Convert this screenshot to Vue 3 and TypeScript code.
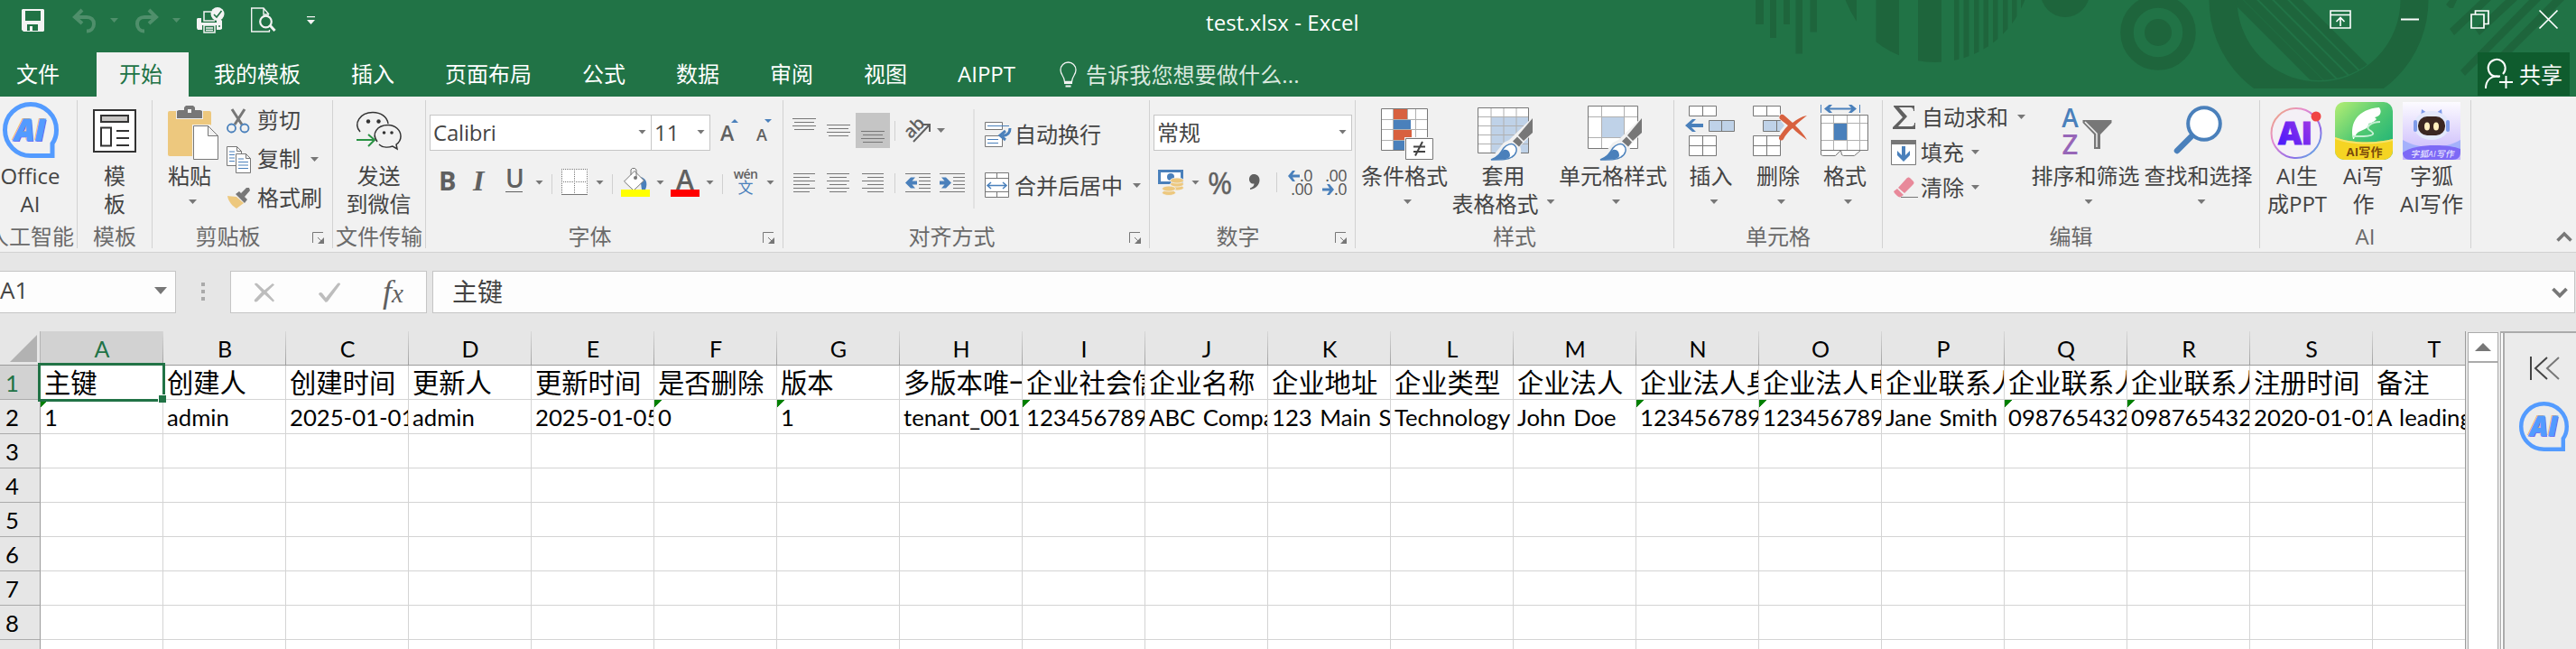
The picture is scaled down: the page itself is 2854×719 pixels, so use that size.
<script setup lang="ts">
interface Column {
  letter: string
  title: string
  value: string
  flagged?: boolean
}

const tabs: string[] = ['我的模板', '插入', '页面布局', '公式', '数据', '审阅', '视图', 'AIPPT']

const columns: Column[] = [
  { letter: 'A', title: '主键', value: '1', flagged: true },
  { letter: 'B', title: '创建人', value: 'admin' },
  { letter: 'C', title: '创建时间', value: '2025-01-01' },
  { letter: 'D', title: '更新人', value: 'admin' },
  { letter: 'E', title: '更新时间', value: '2025-01-05' },
  { letter: 'F', title: '是否删除', value: '0', flagged: true },
  { letter: 'G', title: '版本', value: '1', flagged: true },
  { letter: 'H', title: '多版本唯一', value: 'tenant_001' },
  { letter: 'I', title: '企业社会信', value: '123456789', flagged: true },
  { letter: 'J', title: '企业名称', value: 'ABC Compa' },
  { letter: 'K', title: '企业地址', value: '123 Main St' },
  { letter: 'L', title: '企业类型', value: 'Technology' },
  { letter: 'M', title: '企业法人', value: 'John Doe' },
  { letter: 'N', title: '企业法人身', value: '123456789', flagged: true },
  { letter: 'O', title: '企业法人电', value: '123456789', flagged: true },
  { letter: 'P', title: '企业联系人', value: 'Jane Smith' },
  { letter: 'Q', title: '企业联系人', value: '098765432', flagged: true },
  { letter: 'R', title: '企业联系人', value: '098765432', flagged: true },
  { letter: 'S', title: '注册时间', value: '2020-01-01' },
  { letter: 'T', title: '备注', value: 'A leading' },
]

const emptyRows: number[] = [3, 4, 5, 6, 7, 8]
</script>

<template>
  <div class="app">
    <header class="top">
      <svg class="deco" width="1004" height="107" viewBox="0 0 1004 107" fill="#1e653c">
        <defs>
          <clipPath id="c1"><circle cx="294" cy="-37" r="106" /></clipPath>
          <clipPath id="c2"><circle cx="719" cy="-2" r="91" /></clipPath>
          <clipPath id="c3"><rect x="590" y="0" width="260" height="98" /></clipPath>
        </defs>
        <path d="M95 0h9v27h-9zM111 0h7v42h-7zM126 0h7v27h-7zM139.500 0h7.500v59.500h-7.500zM155.500 0h7.500v35.500h-7.500z" />
        <g clip-path="url(#c1)">
          <path d="M180 0h27v40h-27zM228.500 0h25.500v80h-25.500zM275 0h26v80h-26zM315 0h5.500v80h-5.500zM325.500 0h6v80h-6zM337 0h5.500v80h-5.500zM347.500 0h5.500v80h-5.500zM358 0h5.500v80h-5.500zM369 0h5.500v80h-5.500zM379 0h5.500v80h-5.500zM389 0h5v80h-5z" />
        </g>
        <circle cx="438" cy="-8" r="27" />
        <circle cx="541" cy="36" r="34.500" fill="none" stroke="#1e653c" stroke-width="14.500" />
        <circle cx="541" cy="36" r="15" />
        <g clip-path="url(#c3)">
          <circle cx="719" cy="0" r="106" fill="none" stroke="#1e653c" stroke-width="31" />
        </g>
        <g clip-path="url(#c2)" stroke="#1e653c" stroke-width="10" fill="none">
          <path d="M618 -10l110 110M633 -10l110 110M650 -10l110 110M667 -10l110 110M684 -10l110 110" />
        </g>
        <path d="M864 0h8l-4 9h-4l-4-4zM898 0h12l-41 39-5-7zM926 0h13l-42 39-5-7zM952 0h13l-84 84-5-6zM978 0h13l-68 68h-12z" />
      </svg>
      <div class="titlebar">
        <div class="qat">
          <svg width="25" height="25" viewBox="0 0 25 25"><path fill="#f3f3f3" fill-rule="evenodd" d="M1 0h23l1 1v23l-1 1H2l-2-2V1zM4 2v11h17V2zM6 17v7h3v-5h3v5h6v-7z" /></svg>
          <svg width="26" height="26" viewBox="0 0 26 26" fill="none" stroke="#4f8f6b" stroke-width="4"><path d="M2 9h14c5 0 8 3 8 7.500s-3 8-8 8M11 1L3 9l8 7" /></svg>
          <i class="caret dim"></i>
          <svg width="26" height="26" viewBox="0 0 26 26" fill="none" stroke="#4f8f6b" stroke-width="4"><path d="M24 9H10c-5 0-8 3-8 7.500s3 8 8 8M15 1l8 8-8 7" /></svg>
          <i class="caret dim"></i>
          <svg width="31" height="30" viewBox="0 0 31 30">
            <path fill="#f3f3f3" d="M1 12h4v5h17v-3h5l1 1v9l-2 1h-4v-5H6v5H1l-1-2V13z" />
            <path fill="none" stroke="#f3f3f3" stroke-width="1.500" d="M16 5H8v10h12M8 20h12v8H8zM10 23h8M10 25.500h8" />
            <circle cx="23" cy="7.500" r="7.500" fill="#f3f3f3" /><path d="M19 8l3 3 5.500-7" fill="none" stroke="#217346" stroke-width="1.600" />
            <circle cx="25" cy="21" r="1" fill="#217346" />
          </svg>
          <svg width="28" height="29" viewBox="0 0 28 29" fill="none" stroke="#f3f3f3">
            <path d="M21 27H.7V1H14l6 7M14 1v7h6M20.500 25v2" stroke-width="1.400" /><circle cx="16.500" cy="16" r="6.300" stroke-width="2.200" /><path d="M21 20l5.500 6" stroke-width="3" />
          </svg>
          <svg width="9" height="10" viewBox="0 0 9 10" fill="#f3f3f3"><path d="M0 0h9v1.300H0zM0 4h9L4.500 9z" /></svg>
        </div>
        <div class="doc-title">test.xlsx - Excel</div>
        <div class="win">
          <svg width="24" height="21" viewBox="0 0 24 21" fill="none" stroke="#fff" stroke-width="1.600"><path d="M1 1h22v19H1zM1 5.500h22M12 18V8.500M7.500 13L12 8.500l4.500 4.500" /></svg>
          <svg width="20" height="21" viewBox="0 0 20 21"><path d="M0 9.500h20v2H0z" fill="#fff" /></svg>
          <svg width="21" height="21" viewBox="0 0 21 21" fill="none" stroke="#fff" stroke-width="1.700"><path d="M1 5h14v15H1zM5.500 5V1H20v14.500h-5" /></svg>
          <svg width="21" height="21" viewBox="0 0 21 21" fill="none" stroke="#fff" stroke-width="1.700"><path d="M.5.500l20 20M20.500.500l-20 20" /></svg>
        </div>
      </div>
      <nav class="tabs">
        <span class="tab file">文件</span>
        <span class="tab active">开始</span>
        <span v-for="t in tabs" :key="t" class="tab">{{ t }}</span>
        <svg class="bulb" width="19" height="29" viewBox="0 0 19 29" fill="none" stroke="#f3f3f3" stroke-width="1.300"><path d="M5.500 22.500c0-6-4.500-7-4.500-13a8.500 8.500 0 0 1 17 0c0 6-4.500 7-4.500 13z" /><path d="M5 24h9M6.500 27.500h6" stroke-width="2" /></svg>
        <span class="tell">告诉我您想要做什么...</span>
        <span class="share">
          <svg width="31" height="33" viewBox="0 0 31 33" fill="none" stroke="#fff" stroke-width="2"><path d="M20 16a9.500 9.500 0 1 0-9.500 2.500M16 19c-9-2-15 4-15 13" /><path d="M10 18.500h7M16 25h15M23.500 18v14" /></svg>
          <span>共享</span>
        </span>
      </nav>
    </header>

    <section class="ribbon">
      <div class="group g1">
        <div class="body">
          <div class="big b67">
            <div class="ico"><div class="ai-logo"><svg viewBox="0 0 62 62"><path d="M31 59.500A28.500 28.500 0 1 1 59.500 31c0 6-1.500 11-4.500 15v13.500z" fill="none" stroke="#539bff" stroke-width="5" /></svg><b>AI</b></div></div>
            <span>Office</span><span>AI</span>
          </div>
        </div>
        <div class="foot"><span class="clip">人工智能</span></div>
      </div>

      <div class="group g2">
        <div class="body">
          <div class="big b82">
            <svg class="ico" viewBox="0 0 64 64"><rect x="9" y="9" width="46" height="46" fill="#fff" stroke="#333" stroke-width="2" /><rect x="17" y="15" width="30" height="7" fill="#c8c6c4" stroke="#333" stroke-width="2" /><path d="M17 28.500h11v20H17zM34 32h14M34 40h14M34 48h14" fill="none" stroke="#333" stroke-width="2" /></svg>
            <span>模</span><span>板</span>
          </div>
        </div>
        <div class="foot"><span>模板</span></div>
      </div>

      <div class="group g3">
        <div class="body">
          <div class="big b82">
            <svg class="ico" viewBox="0 0 64 64"><rect x="8" y="10" width="48" height="50" rx="2" fill="#edc87e" /><path d="M17 8h30v11H17z" fill="#f1f1f1" /><path d="M18 18v-8l2-1h6V6l2-2h8l2 2v3h6l2 1v8zM30 8v4h4V8z" fill="#777" fill-rule="evenodd" /><path d="M35 25h20l10 10v30H35z" fill="#f1f1f1" /><path d="M36.500 26.500h16l11 11v26h-27zM52.500 26.500v11h11" fill="#fff" stroke="#777" /></svg>
            <span>粘贴</span><span class="cl"><i class="caret"></i></span>
          </div>
          <div class="clip-list">
            <div class="line">
              <svg width="26" height="28" viewBox="0 0 26 28" fill="none"><path d="M6 1l11 17M20 1L9 18" stroke="#777" stroke-width="3" /><circle cx="5.500" cy="22" r="4.500" stroke="#4a80bb" stroke-width="1.800" /><circle cx="20" cy="22" r="4.500" stroke="#4a80bb" stroke-width="1.800" /></svg>
              <span>剪切</span>
            </div>
            <div class="line">
              <svg width="27" height="30" viewBox="0 0 27 30" fill="#fff" stroke="#777"><path d="M.5.500h11l5 5v16H.5zM11.500.500v5h5" /><path d="M3 6h6M3 9.500h6M3 13h6M3 16.500h6" stroke="#4a80bb" /><path d="M10.500 8.500h11l5 5v16h-16zM21.500 8.500v5h5" /><path d="M13 14h6M13 17.500h11M13 21h11M13 24.500h11" stroke="#4a80bb" /></svg>
              <span>复制</span><i class="caret"></i>
            </div>
            <div class="line">
              <svg width="27" height="24" viewBox="0 0 27 24"><path d="M1 9l10 1 8 7-8 6C6 20 2 15 1 9z" fill="#edc87e" /><path d="M10 7l4-3 9 9-3 4zM16 6l6-6h3l1 3-6 7z" fill="#777" /></svg>
              <span>格式刷</span>
            </div>
          </div>
        </div>
        <div class="foot"><span>剪贴板</span><svg class="launch" viewBox="0 0 14 14"><path d="M.5 12V.500H12" fill="none" stroke="#777" /><path d="M6 6l5 5" stroke="#777" /><path d="M13 6v7H6z" fill="#777" /></svg></div>
      </div>

      <div class="group g4">
        <div class="body">
          <div class="big b101">
            <svg class="ico" viewBox="0 0 64 64" fill="none" stroke="#333" stroke-width="1.500"><path d="M11 33c-8-9 0-21.500 14-21.500 9 0 16 5 17 12.500" /><path d="M30 44c-7-9 0-18.500 12-18.500 8 0 14 6 14 12.500 0 4-2 7-5 9l1 5-5-3c-6 2-12 1-15-2" /><g fill="#333" stroke="none"><circle cx="20" cy="21.500" r="2.200" /><circle cx="31.500" cy="21.500" r="2.200" /><circle cx="37.500" cy="34" r="1.800" /><circle cx="46" cy="34" r="1.800" /></g><path d="M7 42h20M20 36l7 6-7 7" stroke="#2a9244" stroke-width="2" /></svg>
            <span>发送</span><span>到微信</span>
          </div>
        </div>
        <div class="foot tight"><span>文件传输</span></div>
      </div>

      <div class="group g5">
        <div class="body col">
          <div class="row-font1">
            <div class="combo name"><span>Calibri</span><i class="caret"></i></div>
            <div class="combo size"><span>11</span><i class="caret"></i></div>
            <div class="grow"><b>A</b><svg width="8" height="4" viewBox="0 0 8 4"><path d="M0 4l4-4 4 4z" fill="#4a80bb" /></svg></div>
            <div class="grow small"><b>A</b><svg width="8" height="4" viewBox="0 0 8 4"><path d="M0 0l4 4 4-4z" fill="#4a80bb" /></svg></div>
          </div>
          <div class="row-font2">
            <b class="fmt">B</b><b class="fmt it">I</b><b class="fmt un">U</b><i class="caret"></i><i class="sep"></i>
            <svg width="30" height="30" viewBox="0 0 30 30" fill="none" stroke="#777"><path d="M.5.500h29v28H.5z" fill="#fff" stroke="none" /><path d="M0 .500h29M.5 0v28M28.500 0v28M14.500 0v28M0 14.500h29" stroke-dasharray="1 1" /><path d="M0 28.500h29" /></svg>
            <i class="caret"></i><i class="sep"></i>
            <svg width="32" height="32" viewBox="0 0 32 32"><path d="M21 10c7 1 9 7 6 14h-4z" fill="#4a80bb" /><path d="M3.500 15L15 3.500 25.500 14 14 25z" fill="#fff" stroke="#777" /><path d="M11 8V2l1.500-1.500h3L17 2v9" fill="none" stroke="#777" /><circle cx="16" cy="11" r="2" fill="#777" /><path d="M0 24h32v8H0z" fill="#ff0" /></svg>
            <i class="caret"></i>
            <div class="fcolor"><b>A</b><i></i></div>
            <i class="caret"></i><i class="sep"></i>
            <div class="wen"><span>wén</span><span>文</span></div>
            <i class="caret"></i>
          </div>
        </div>
        <div class="foot"><span>字体</span><svg class="launch" viewBox="0 0 14 14"><path d="M.5 12V.500H12" fill="none" stroke="#777" /><path d="M6 6l5 5" stroke="#777" /><path d="M13 6v7H6z" fill="#777" /></svg></div>
      </div>

      <div class="group g6">
        <div class="body">
          <div class="align-left">
            <div class="row-al a1">
              <svg width="26" height="28" viewBox="0 0 26 28" stroke="#777"><path d="M0 .500h26M2 4.500h22M0 8.500h26M2 12.500h22" /></svg>
              <svg width="26" height="28" viewBox="0 0 26 28" stroke="#777"><path d="M0 7.500h26M2 11.500h22M0 15.500h26M2 19.500h22" /></svg>
              <div class="pressed"><svg width="26" height="28" viewBox="0 0 26 28" stroke="#777"><path d="M0 15.500h26M2 19.500h22M0 23.500h26M2 27.500h22" /></svg></div>
              <i class="sep"></i>
              <svg width="29" height="30" viewBox="0 0 29 30"><text x="-1" y="20" transform="rotate(-45 8 14)" font-size="20" font-weight="600" fill="#606060">ab</text><path d="M9 27L27 8M19 8h8v8" fill="none" stroke="#606060" stroke-width="2" /></svg>
              <i class="caret"></i>
            </div>
            <div class="row-al a2">
              <svg width="24" height="22" viewBox="0 0 24 22" stroke="#777"><path d="M0 .500h24M0 4.500h18M0 8.500h24M0 12.500h18M0 16.500h24M0 20.500h18" /></svg>
              <svg width="25" height="22" viewBox="0 0 25 22" stroke="#777"><path d="M0 .500h25M3 4.500h19M0 8.500h25M3 12.500h19M0 16.500h25M3 20.500h19" /></svg>
              <svg width="24" height="22" viewBox="0 0 24 22" stroke="#777"><path d="M0 .500h24M6 4.500h18M0 8.500h24M6 12.500h18M0 16.500h24M6 20.500h18" /></svg>
              <i class="sep"></i>
              <svg width="28" height="22" viewBox="0 0 28 22" stroke="#777"><path d="M0 .500h28M15 4.500h13M15 8.500h13M15 12.500h13M15 16.500h13M0 20.500h28" /><path d="M0 10.500L6 4.500h5L7.500 8.500H13v4H7.500L11 16.500H6z" fill="#4a80bb" stroke="none" /></svg>
              <svg width="28" height="22" viewBox="0 0 28 22" stroke="#777"><path d="M0 .500h28M15 4.500h13M15 8.500h13M15 12.500h13M15 16.500h13M0 20.500h28" /><path d="M13 10.500L7 4.500H2L5.500 8.500H0v4h5.500L2 16.500h5z" fill="#4a80bb" stroke="none" /></svg>
            </div>
          </div>
          <div class="align-right">
            <div class="wrap-row">
              <svg width="30" height="28" viewBox="0 0 30 28" fill="#fff" stroke="#777"><path d="M.5.500h19v8H.5zM.5 15.500h19v12H.5z" /><path d="M3 4.500h24M3 19.500h12M3 23.500h12" stroke="#4a80bb" /><path d="M28 7c0 6-3 8-8 8.500M23 10l-6 5 6 5" fill="none" stroke="#4a80bb" stroke-width="3" /></svg>
              <span>自动换行</span>
            </div>
            <div class="wrap-row">
              <svg width="28" height="29" viewBox="0 0 28 29" fill="#fff" stroke="#777"><path d="M.5.500h26v27H.5zM.5 6.500h26M.5 21.500h26M13.500.500v6M13.500 21.500v6" /><path d="M3 14.500h21M7 11l-4 3.500L7 18M20 11l4 3.500-4 3.500" fill="none" stroke="#4a80bb" stroke-width="1.500" /></svg>
              <span>合并后居中</span><i class="caret"></i>
            </div>
          </div>
        </div>
        <div class="foot"><span>对齐方式</span><svg class="launch" viewBox="0 0 14 14"><path d="M.5 12V.500H12" fill="none" stroke="#777" /><path d="M6 6l5 5" stroke="#777" /><path d="M13 6v7H6z" fill="#777" /></svg></div>
      </div>

      <div class="group g7">
        <div class="body col">
          <div class="row-num1"><div class="combo"><span>常规</span><i class="caret"></i></div></div>
          <div class="row-num2">
            <svg width="29" height="29" viewBox="0 0 29 29"><path d="M1.500 1.500h25v13h-25z" fill="#fff" stroke="#4a80bb" stroke-width="3" /><circle cx="14" cy="8" r="4" fill="#4a80bb" /><g fill="#edc87e" stroke="#f1f1f1" stroke-width=".8"><ellipse cx="21" cy="20" rx="7.500" ry="3" /><ellipse cx="21" cy="16" rx="7.500" ry="3" /><ellipse cx="21" cy="12" rx="7.500" ry="3" /><ellipse cx="12" cy="25.500" rx="7.500" ry="3" /><ellipse cx="12" cy="21" rx="7.500" ry="3" /></g></svg>
            <i class="caret"></i>
            <span class="pct">%</span>
            <svg width="12" height="18" viewBox="0 0 12 18"><path d="M5 0c4 0 6.500 2.500 6.500 6.500C11.500 12 7 16 1 17v-1.500c3-1 4.500-3 4.500-5C2 11 0 8.500 0 5.500 0 2.500 2 0 5 0z" fill="#606060" /></svg>
            <i class="sep"></i>
            <div class="dec"><span><svg width="13" height="12" viewBox="0 0 13 12"><path d="M0 6l5-6h3L5 4.500h8v3H5L8 12H5z" fill="#4a80bb" /></svg>.0</span><span>.00</span></div>
            <div class="dec"><span>.00</span><span><svg width="13" height="12" viewBox="0 0 13 12"><path d="M13 6L8 0H5l3 4.500H0v3h8L5 12h3z" fill="#4a80bb" /></svg>.0</span></div>
          </div>
        </div>
        <div class="foot"><span>数字</span><svg class="launch" viewBox="0 0 14 14"><path d="M.5 12V.500H12" fill="none" stroke="#777" /><path d="M6 6l5 5" stroke="#777" /><path d="M13 6v7H6z" fill="#777" /></svg></div>
      </div>

      <div class="group g8">
        <div class="body">
          <div class="big b108">
            <svg class="ico" viewBox="0 0 64 64"><path d="M6 7h52v47H6z" fill="#fff" /><path d="M6 19.500h52M6 30.500h52M6 42.500h52M19.500 7v47M35.500 7v47M44.500 7v47" stroke="#b0b0b0" /><path d="M6.500 7.500h51v46h-51z" fill="none" stroke="#777" /><path d="M20 8h15v11H20zM20 31h20v11H20z" fill="#d8613f" /><path d="M20 20h19v10H20zM20 43h14v10H20z" fill="#4a80bb" /><path d="M32 39h32v25H32z" fill="#f1f1f1" /><path d="M33.500 40.500h30v23h-30z" fill="#fff" stroke="#777" /><path d="M42 49.500h13M42 55h13M52 44l-8 15.500" stroke="#444" stroke-width="2" /></svg>
            <span>条件格式</span><span class="cl"><i class="caret"></i></span>
          </div>
          <div class="big b111">
            <svg class="ico" viewBox="0 0 64 64"><path d="M3.500 6.500h56v50h-56z" fill="#fff" /><path d="M18 16h42v41H18z" fill="#bfd2e8" /><path d="M3.500 16.500h56M3.500 26.500h56M3.500 36.500h56M3.500 46.500h56M18 6v51M32 6v51M46 6v51" stroke="#b0b0b0" /><path d="M3.500 6.500h56v50h-56z" fill="none" stroke="#777" /><path d="M65 16L38 42l-6 3-16 20h30c6-4 6-12 4-16l15-15z" fill="#f1f1f1" /><path d="M64 18v16L54 43l-6-6zM47 38.500l6 6-4 5-7-6z" fill="#777" /><path d="M18 64c8-3 11-8 14-13 3-4 9-6 12-3 4 4 2 10-3 13-4 3-10 3-23 3z" fill="#fff" stroke="#4a80bb" stroke-width="1.500" /><path d="M18 64c8-3 10-9 14-11 5-1 7 3 7 6 0 4-5 5-21 5z" fill="#4a80bb" /></svg>
            <span>套用</span><span class="withc">表格格式<i class="caret"></i></span>
          </div>
          <div class="big b132">
            <svg class="ico" viewBox="0 0 64 64"><path d="M4.500 4.500h55v47h-55z" fill="#fff" /><path d="M19.500 16.500h25v23h-25z" fill="#bfd2e8" /><path d="M4 16.500h56M4 39.500h56M19.500 4v48M44.500 4v48" stroke="#b0b0b0" /><path d="M4.500 4.500h55v47h-55z" fill="none" stroke="#777" /><path d="M65 16L38 42l-6 3-16 20h30c6-4 6-12 4-16l15-15z" fill="#f1f1f1" /><path d="M64 18v16L54 43l-6-6zM47 38.500l6 6-4 5-7-6z" fill="#777" /><path d="M18 64c8-3 11-8 14-13 3-4 9-6 12-3 4 4 2 10-3 13-4 3-10 3-23 3z" fill="#fff" stroke="#4a80bb" stroke-width="1.500" /><path d="M18 64c8-3 10-9 14-11 5-1 7 3 7 6 0 4-5 5-21 5z" fill="#4a80bb" /></svg>
            <span>单元格样式</span><span class="cl"><i class="caret"></i></span>
          </div>
        </div>
        <div class="foot"><span>样式</span></div>
      </div>

      <div class="group g9">
        <div class="body">
          <div class="big b75">
            <svg class="ico" viewBox="0 0 64 64" fill="#fff" stroke="#777"><path d="M7.500 4.500h30v11h-30zM22.500 4.500v11M7.500 37.500h30v22h-30zM22.500 37.500v22M7.500 48.500h30" /><path d="M29.500 20.500h28v12h-28zM43.500 20.500v12" fill="#bfd2e8" /><path d="M3 26l8-7h4l-5 5h13v4H10l5 5h-4z" fill="#4a80bb" stroke="none" /></svg>
            <span>插入</span><span class="cl"><i class="caret"></i></span>
          </div>
          <div class="big b74">
            <svg class="ico" viewBox="0 0 64 64" fill="#fff" stroke="#777"><path d="M4.500 4.500h30v11h-30zM19.500 4.500v11M4.500 37.500h30v22h-30zM19.500 37.500v22M4.500 48.500h30" /><path d="M15.500 20.500h20l6 6-6 6h-20zM30.500 20.500v12" fill="#bfd2e8" /><path d="M31 36l8-10-7-9 4-6 11 8 19-9-1 6-10 8 12 20-19-14-13 7z" fill="#f1f1f1" stroke="none" /><path d="M34 19c-2-4 2-7 5-4l9 8c5-4 10-7 16-8-4 3-9 7-13 11 5 5 10 10 13 16-6-4-12-9-16-13-4 3-8 8-10 12-2 3-6 1-5-2 3-5 6-9 10-13z" fill="#d8613f" stroke="none" /></svg>
            <span>删除</span><span class="cl"><i class="caret"></i></span>
          </div>
          <div class="big b74">
            <svg class="ico" viewBox="0 0 64 64"><path d="M5.500 3v9M48.500 3v9" stroke="#4a80bb" /><path d="M9 7.500L14.500 3H18l-3 3.500h24L36 3h3.500L45 7.500 39.500 12H36l3-3.500H15l3 3.500h-3.500z" fill="#4a80bb" /><path d="M5.500 53.500v5l2 1h14l6-6 1 5 2 1h12l7-6" fill="#fff" stroke="#777" /><path d="M5.500 14.500h52v39h-52z" fill="#fff" stroke="#777" /><path d="M6 23.500h51M6 42.500h51M19.500 15v38M34.500 15v38M48.500 15v38" stroke="#b0b0b0" /><path d="M20 24h14v18H20z" fill="#4a80bb" /></svg>
            <span>格式</span><span class="cl"><i class="caret"></i></span>
          </div>
        </div>
        <div class="foot"><span>单元格</span></div>
      </div>

      <div class="group g10">
        <div class="body">
          <div class="edit-list">
            <div class="line">
              <svg width="28" height="28" viewBox="0 0 28 28"><path d="M3 1h23v6h-1c0-3-1-4-4-4H9l9 10L8 24h14c3 0 4-1 4-4h1v7H2v-2l11-11L3 2z" fill="#606060" /></svg>
              <span>自动求和</span><i class="caret"></i>
            </div>
            <div class="line">
              <svg width="28" height="28" viewBox="0 0 28 28"><path d="M.5.500h27v27H.5z" fill="#fff" stroke="#777" /><path d="M0 0h28v5H0z" fill="#777" /><path d="M12 7h4v10l5-5v5l-7 7-7-7v-5l5 5z" fill="#4a80bb" /></svg>
              <span>填充</span><i class="caret"></i>
            </div>
            <div class="line">
              <svg width="30" height="24" viewBox="0 0 30 24"><path d="M8 12L17 2c2-2 3-2 5 0l2 2c2 2 2 3 0 5l-9 9zM3 16l4-3 7 7-3 2c-1 1-3 0-4-1l-3-3z" fill="#e8899a" /><path d="M11 22.500h19" stroke="#777" /></svg>
              <span>清除</span><i class="caret"></i>
            </div>
          </div>
          <div class="big b125">
            <svg class="ico" viewBox="0 0 64 64"><text x="14.500" y="28" font-size="28" font-weight="600" text-anchor="middle" fill="#4a80bb">A</text><text x="14.500" y="57.500" font-size="31" font-weight="600" text-anchor="middle" fill="#9766b8">Z</text><path d="M28.500 20h32v3L48 36v16h-7V36L28.500 23z" fill="#777" /><path d="M31 22l13 13v15" fill="none" stroke="#f1f1f1" stroke-width="1.500" /></svg>
            <span>排序和筛选</span><span class="cl"><i class="caret"></i></span>
          </div>
          <div class="big b125">
            <svg class="ico" viewBox="0 0 64 64" stroke="#4a80bb"><path d="M25 37L8 54" stroke-width="6.500" stroke-linecap="round" /><circle cx="38" cy="24" r="17.800" fill="#fff" stroke-width="4" /></svg>
            <span>查找和选择</span><span class="cl"><i class="caret"></i></span>
          </div>
        </div>
        <div class="foot"><span>编辑</span></div>
      </div>

      <div class="group g11">
        <div class="body">
          <div class="big b74">
            <svg class="ico" viewBox="0 0 64 64">
              <defs>
                <linearGradient id="ring" x1="0" y1="0" x2="1" y2="1"><stop offset="0" stop-color="#f0b070" /><stop offset=".35" stop-color="#e58ad0" /><stop offset=".7" stop-color="#8f6be8" /><stop offset="1" stop-color="#54c8e0" /></linearGradient>
                <linearGradient id="ai" x1="0" y1="1" x2="1" y2="0"><stop offset="0" stop-color="#3a16ff" /><stop offset="1" stop-color="#b03be0" /></linearGradient>
              </defs>
              <circle cx="31" cy="34.500" r="27.500" fill="#f4f0f6" stroke="url(#ring)" stroke-width="2" />
              <text x="30" y="47" font-size="36" font-weight="800" text-anchor="middle" fill="url(#ai)" stroke="url(#ai)" textLength="38">AI</text><circle cx="53" cy="16" r="5.500" fill="#f04444" />
            </svg>
            <span>AI生</span><span>成PPT</span>
          </div>
          <div class="big b73">
            <svg class="ico" viewBox="0 0 64 64">
              <defs><linearGradient id="leaf" x1="0" y1="0" x2="1" y2="1"><stop offset="0" stop-color="#b5ee74" /><stop offset=".5" stop-color="#4fc872" /><stop offset="1" stop-color="#12ad78" /></linearGradient><clipPath id="sq"><rect width="64" height="64" rx="10" /></clipPath></defs>
              <g clip-path="url(#sq)"><path d="M0 0h64v64H0z" fill="url(#leaf)" /><path d="M0 39c18 7 46 7 64 2v23H0z" fill="#f5d423" /><path d="M0 39c18 7 46 7 64 2v2c-18 5-46 5-64-2z" fill="#f7e36a" /></g>
              <path d="M20 41c-4-18 5-33 29-35 4 6 0 10-5 11l2 2c-3 4-9 5-9 5l1 2c-4 5-9 5-13 8-2 2-3 4-4 7z" fill="#fff" /><path d="M50 22c-10 0-17 6-12 9s8 6-6 7H20" fill="none" stroke="#c6f0d4" stroke-width="2" />
              <text x="32.500" y="60" font-size="13" font-weight="700" text-anchor="middle" fill="#7a4a0c" textLength="40">AI写作</text>
            </svg>
            <span>Ai写</span><span>作</span>
          </div>
          <div class="big b78">
            <svg class="ico" viewBox="0 0 64 64">
              <defs><linearGradient id="sky" x1="0" y1="0" x2="0" y2="1"><stop offset="0" stop-color="#fcfbff" /><stop offset="1" stop-color="#c6b4fb" /></linearGradient></defs>
              <path d="M0 0h64v64H0z" fill="url(#sky)" /><path d="M0 42c10 6 22 8 32 8s22-2 32-8v13c0 6-3 9-9 9H9c-6 0-9-3-9-9z" fill="#a4b1fb" /><path d="M0 56c12-10 50-10 64-4v3c0 6-3 9-9 9H9c-6 0-9-3-9-8z" fill="#7d69f6" />
              <path d="M20 17l1-9 9 6h4l9-6 1 9z" fill="#7f9bea" /><ellipse cx="32" cy="26" rx="20" ry="16" fill="#e3e8fc" /><rect x="12" y="20" width="4" height="13" rx="2" fill="#7f9bea" /><rect x="48" y="20" width="4" height="13" rx="2" fill="#7f9bea" /><rect x="17" y="16" width="30" height="21" rx="10" fill="#3b2722" /><ellipse cx="27" cy="27" rx="3" ry="4.500" fill="#fff0c0" /><ellipse cx="37" cy="27" rx="3" ry="4.500" fill="#fff0c0" />
              <text x="32.500" y="61" font-size="9.500" font-weight="500" font-style="italic" text-anchor="middle" fill="#e9e6ff" textLength="48">字狐AI写作</text>
            </svg>
            <span>字狐</span><span>AI写作</span>
          </div>
        </div>
        <div class="foot"><span>AI</span></div>
      </div>
      <div class="ribbon-end"><svg width="18" height="11" viewBox="0 0 18 11"><path d="M1.500 9.500L9 2l7.500 7.500" fill="none" stroke="#777" stroke-width="3.500" /></svg></div>
    </section>

    <section class="formula">
      <div class="namebox"><span>A1</span><i class="bigcaret"></i></div>
      <div class="dots"><i></i><i></i><i></i></div>
      <div class="fbtns">
        <svg width="24" height="22" viewBox="0 0 24 22" fill="#bdbdbd"><path d="M1 2c1-2 3-1 4 0l7 6.500L21 1l2 1.500-8.500 8L23 20l-1.500 1.500-9.500-8.500-8 8c-2 1-4 0-3-2l8-8.500z" /></svg>
        <svg width="26" height="22" viewBox="0 0 26 22" fill="#bdbdbd"><path d="M1 13c1-3 4-2 5 0l3 4L22 1c2-1 3 0 3 1L11 21c-1 1-3 1-3 0z" /></svg>
        <em class="fx">f<small>x</small></em>
      </div>
      <div class="finput"><span>主键</span><svg width="18" height="12" viewBox="0 0 18 12"><path d="M1.500 2L9 9.500 16.500 2" fill="none" stroke="#777" stroke-width="3.800" /></svg></div>
    </section>

    <main class="work">
      <div class="sheet">
        <div class="hrow">
          <div class="corner"><svg width="30" height="30" viewBox="0 0 30 30"><path d="M30 0v30H0z" fill="#b2b2b2" /></svg></div>
          <div v-for="(c, i) in columns" :key="c.letter" class="ch" :class="{ on: i === 0 }">{{ c.letter }}</div>
        </div>
        <div class="drow titles">
          <div class="rh on">1</div>
          <div v-for="(c, i) in columns" :key="c.letter" class="cell" :class="{ sel: i === 0 }">{{ c.title }}</div>
        </div>
        <div class="drow">
          <div class="rh">2</div>
          <div v-for="c in columns" :key="c.letter" class="cell" :class="{ flag: c.flagged }">{{ c.value }}</div>
        </div>
        <div v-for="r in emptyRows" :key="r" class="drow">
          <div class="rh">{{ r }}</div>
          <div v-for="c in columns" :key="c.letter" class="cell"></div>
        </div>
        <div class="drow">
          <div class="rh"></div>
          <div v-for="c in columns" :key="c.letter" class="cell"></div>
        </div>
      </div>
      <div class="scroll"><div class="up"><svg width="18" height="9" viewBox="0 0 18 9"><path d="M0 9l9-9 9 9z" fill="#777" /></svg></div><div class="trough"></div></div>
      <aside class="pane">
        <svg width="33" height="27" viewBox="0 0 33 27" fill="none" stroke="#444" stroke-width="2"><path d="M1 0v26M19 1L6 13l13 12" /><path d="M32 1L19 13l13 12" stroke="#777" /></svg>
        <div class="ai-logo side"><svg viewBox="0 0 62 62"><path d="M31 59.500A28.500 28.500 0 1 1 59.500 31c0 6-1.500 11-4.500 15v13.500z" fill="none" stroke="#539bff" stroke-width="5" /></svg><b>AI</b></div>
      </aside>
    </main>
  </div>
</template>

<style>
html, body { margin: 0; overflow: hidden; }
</style>

<style scoped>
.app { width: 2854px; height: 719px; overflow: hidden; display: flex; flex-direction: column; background: #e6e6e6; color: #444; font: 24px/31px "Open Sans", "Noto Sans CJK SC", sans-serif; white-space: nowrap; }
.app *, .app *::before, .app *::after { box-sizing: border-box; }
svg { display: block; flex: none; overflow: visible; }
svg.deco { overflow: hidden; }
.caret { display: block; flex: none; width: 9px; height: 5px; background: #777; clip-path: polygon(0 0, 100% 0, 50% 100%); }
.caret.dim { background: #4f8f6b; }
.sep { width: 1px; height: 22px; background: #d0d0d0; }

.top { position: relative; height: 107px; background: #217346; color: #fff; flex: none; }
.deco { position: absolute; left: 1850px; top: 0; }
.titlebar { position: relative; height: 58px; display: flex; }
.qat { width: 1336px; height: 45px; padding-left: 24px; display: grid; grid-template-columns: 56px 42px 28px 41px 27px 60px 62px auto; align-items: center; }
.doc-title { width: 1245px; line-height: 50px; letter-spacing: .1px; }
.win { display: grid; grid-template-columns: 79px 77px 76px 21px; height: 43px; align-items: center; }
.tabs { position: relative; height: 49px; display: flex; align-items: center; line-height: 47px; }
.tab { padding: 0 28px; height: 49px; }
.tab.file { padding: 0 0 0 18px; width: 107px; }
.tab.active { padding: 0 0 0 25px; width: 102px; background: #f1f1f1; color: #217346; }
.bulb { margin: 0 10px 0 21px; }
.tell { color: #d9e8df; letter-spacing: .15px; }
.share { margin-left: auto; margin-right: 7px; width: 102px; height: 48px; align-self: flex-start; background: #0f5c2e; display: flex; align-items: center; gap: 7px; padding-left: 8px; }

.ribbon { height: 173px; display: flex; background: #f1f1f1; border-bottom: 1px solid #d2d2d2; flex: none; }
.group { flex: none; display: flex; flex-direction: column; background: linear-gradient(#d2d2d2, #d2d2d2) right 4px / 1px 164px no-repeat; overflow: hidden; }
.g1 { width: 86px; } .g2 { width: 83px; } .g3 { width: 200px; } .g4 { width: 103px; } .g5 { width: 396px; } .g6 { width: 406px; }
.g7 { width: 228px; } .g8 { width: 353px; } .g9 { width: 231px; } .g10 { width: 418px; } .g11 { width: 234px; }
.g9 .body { padding-left: 3px; } .g11 .body { padding-left: 4px; }
.body { height: 138px; display: flex; }
.body.col { flex-direction: column; padding-top: 20px; }
.foot { height: 34px; display: flex; align-items: center; color: #6a6a6a; line-height: 34px; padding-right: 1px; }
.foot span { flex: 1; text-align: center; }
.foot .clip { direction: rtl; text-align: right; margin-right: 3px; width: 82px; flex: none; }
.launch { width: 14px; height: 14px; margin: 4px 8px 0 10px; }
.big { flex: none; display: flex; flex-direction: column; align-items: center; }
.big .ico { width: 64px; height: 64px; margin: 6px 0 2px; flex: none; }
.big > span { height: 31px; flex: none; }
.big .cl { display: flex; align-items: center; padding: 0 0 4px 7px; }
.big .withc { display: flex; align-items: center; gap: 9px; }
.withc .caret { margin-bottom: 4px; }
.b67 { width: 67px; } .b73 { width: 73px; } .b74 { width: 74px; } .b75 { width: 75px; } .b78 { width: 78px; } .b82 { width: 82px; } .b101 { width: 101px; } .b108 { width: 108px; } .b111 { width: 111px; } .b125 { width: 125px; } .b132 { width: 132px; }
.ai-logo { display: grid; width: 62px; height: 62px; font-size: 62px; place-items: center; margin-left: 1px; }
.ai-logo > * { grid-area: 1 / 1; }
.ai-logo svg { width: 1em; height: 1em; }
.ai-logo b { font-size: .53em; line-height: 1; font-weight: 800; font-style: italic; color: #539bff; letter-spacing: .02em; text-shadow: -1px -1px #f5b04a, 1px 1px #8a4df0; -webkit-text-stroke: 1px #539bff; }
.clip-list { padding-top: 5px; }
.clip-list .line { display: grid; grid-template-columns: 34px 59px 9px; height: 43px; align-items: center; }
.clip-list .line:last-child { grid-template-columns: 34px 80px; }
.clip-list .line span { line-height: 41px; height: 43px; }

.combo { height: 40px; flex: none; background: #fff; border: 1px solid #c6c6c6; display: flex; align-items: center; justify-content: space-between; padding: 0 5px 2px 3px; color: #444; }
.row-font1 { display: flex; height: 40px; padding-left: 4px; }
.combo.name { width: 246px; letter-spacing: -.2px; }
.combo.size { width: 66px; margin-left: -1px; padding-right: 5px; }
.grow { display: flex; flex: none; align-items: flex-start; width: 40px; margin-left: 11px; color: #606060; }
.grow b { font-size: 23px; font-weight: 600; line-height: 41px; }
.grow svg { margin: 5px 0 0 -3px; }
.grow.small { margin-left: 0; width: 25px; }
.grow.small b { font-size: 18px; line-height: 45px; }
.row-font2 { display: grid; grid-template-columns: 38px 36px 33px 18px 11px 38px 18px 10px 39px 16px 39px 18px 13px 36px 9px; margin-top: 15px; padding-left: 14px; height: 40px; align-items: center; }
.row-font2 .sep { margin-top: 4px; }
.fmt { font-size: 29px; line-height: 34px; color: #606060; margin-bottom: 5px; }
.fmt.it { font-family: "Liberation Serif", serif; font-style: italic; font-size: 32px; }
.fmt.un { width: 19px; height: 27px; line-height: 23px; border-bottom: 1px solid #606060; font-weight: 600; font-size: 28px; letter-spacing: -1px; margin: 0 0 5px; }
.fcolor { width: 32px; height: 32px; display: flex; flex-direction: column; align-items: center; color: #606060; }
.fcolor b { font-size: 30px; line-height: 26px; height: 24px; font-weight: 600; flex: none; }
.fcolor i { width: 32px; height: 8px; background: #f00; flex: none; }
.wen { width: 26px; display: flex; flex-direction: column; align-items: center; font-size: 14px; line-height: 12px; color: #606060; font-weight: 600; letter-spacing: -.6px; }
.wen span:last-child { color: #4a80bb; font-size: 17px; line-height: 18px; font-weight: 400; letter-spacing: 0; }

.align-left { width: 212px; padding-top: 18px; margin-top: 0; background: linear-gradient(#e2e2e2, #e2e2e2) right 14px / 2px 110px no-repeat; }
.row-al { display: grid; height: 40px; align-items: center; }
.a1 { grid-template-columns: 38px 32px 43px 12px 35px 9px; padding-left: 10px; height: 39px; }
.a2 { grid-template-columns: 37px 39px 36px 12px 38px 28px; padding-left: 11px; margin-top: 19px; }
.pressed { width: 38px; height: 39px; background: #c5c5c5; padding: 5px 6px; }
.align-right { padding: 20px 0 0 11px; }
.wrap-row { display: grid; grid-template-columns: 33px 131px 9px; height: 43px; align-items: center; margin-bottom: 14px; }
.row-num1 { padding: 0 4px; }
.row-num2 { display: grid; grid-template-columns: 37px 18px 46px 30px 12px 38px 28px; padding-left: 9px; margin-top: 15px; height: 40px; align-items: center; }
.pct { font-size: 33px; color: #606060; -webkit-text-stroke: .4px #606060; }
.dec { width: 28px; font-size: 18px; line-height: 15px; color: #555; display: flex; flex-direction: column; align-items: flex-end; letter-spacing: -.5px; }
.dec span { display: flex; align-items: center; height: 15px; }
.edit-list { width: 162px; padding: 3px 0 0 9px; }
.edit-list .line { display: grid; grid-template-columns: 33px 56px 9px; height: 39px; align-items: center; }
.edit-list .line:first-child { grid-template-columns: 34px 106px 9px; }
.edit-list .line span { line-height: 39px; }
.ribbon-end { flex: 1; display: flex; align-items: flex-end; justify-content: flex-end; padding: 0 4px 11px 0; }

.formula { height: 47px; margin-top: 20px; display: flex; flex: none; }
.formula > div { border: 1px solid #c5c5c5; background: #fdfdfd; }
.namebox { width: 195px; border-left: 0 !important; display: flex; align-items: center; justify-content: space-between; padding: 0 9px 4px 0; font-size: 26px; }
.bigcaret { width: 14px; height: 8px; margin-top: 1px; background: #777; clip-path: polygon(0 0, 100% 0, 50% 100%); }
.formula > .dots { border: 0; background: none; width: 60px; padding: 13px 0 0 28px; display: flex; flex-direction: column; gap: 4px; }
.dots i { width: 4px; height: 4px; background: #aaa; flex: none; }
.fbtns { width: 218px; display: grid; grid-template-columns: 71px 72px 40px; padding-left: 25px; align-items: center; }
.fx { font-family: "Liberation Serif", serif; font-size: 36px; color: #606060; line-height: 40px; }
.fx small { font-size: 29px; }
.finput { flex: none; width: 2374px; margin-left: 6px; display: flex; justify-content: space-between; align-items: center; padding: 0 7px 0 21px; font-size: 28px; }

.work { display: flex; height: 352px; margin-top: 20px; flex: none; }
.sheet { width: 2732px; height: 352px; overflow: hidden; position: relative; border-right: 1px solid #9b9b9b; color: #000; font-family: Lato, "Noto Sans CJK SC", sans-serif; font-size: 25.700px; word-spacing: 2px; }
.hrow { display: flex; height: 38px; border-bottom: 1px solid #9b9b9b; }
.corner { width: 45px; flex: none; padding: 4px 0 0 11px; border-right: 1px solid #b5b5b5; }
.ch { width: 136px; flex: none; text-align: center; font-size: 25px; line-height: 39px; background: linear-gradient(#d8d8d8, #a0a0a0) right / 1px 100% no-repeat; }
.ch.on { background-color: #d2d2d2; color: #217346; }
.drow { display: flex; height: 38px; }
.rh { width: 45px; flex: none; border-right: 1px solid #9b9b9b; border-bottom: 1px solid #ababab; background: #e6e6e6; padding-left: 6px; line-height: 39px; }
.rh.on { background: #d2d2d2; color: #217346; }
.cell { width: 136px; flex: none; overflow: hidden; background: #fff; border-right: 1px solid #d4d4d4; border-bottom: 1px solid #d4d4d4; padding-left: 4px; line-height: 39px; }
.titles .cell { font-size: 29.300px; line-height: 37px; letter-spacing: 0; }
.flag { background: linear-gradient(135deg, #008000 0 6px, transparent 6.300px) #fff; }
.titles .cell.sel { position: relative; overflow: visible; }
.sel::before { content: ""; position: absolute; left: -3px; top: -3px; width: 141px; height: 43px; border: 3px solid #217346; z-index: 1; }
.sel::after { content: ""; position: absolute; left: 130px; top: 32px; width: 9px; height: 9px; background: #217346; border: 1px solid #fff; border-right: 0; border-bottom: 0; z-index: 2; }
.scroll { width: 34px; margin-left: 2px; display: flex; flex-direction: column; padding-top: 1px; flex: none; }
.up { height: 34px; border: 1px solid #ababab; border-bottom-width: 2px; background: #fff; display: flex; justify-content: center; padding-top: 11px; flex: none; }
.trough { flex: 1; background: #fff; border: 1px solid #ababab; border-width: 0 1px; }
.pane { flex: 1; margin-left: 2px; border-left: 1px solid #ababab; border-top: 2px solid #ababab; background: linear-gradient(90deg, #fff 0 2px, #ababab 2px 4px, #ebebeb 4px); padding: 26px 0 0 20px; }
.pane > svg { margin-left: 12px; }
.ai-logo.side { width: 55px; height: 55px; font-size: 55px; margin: 23px 0 0; }
</style>
